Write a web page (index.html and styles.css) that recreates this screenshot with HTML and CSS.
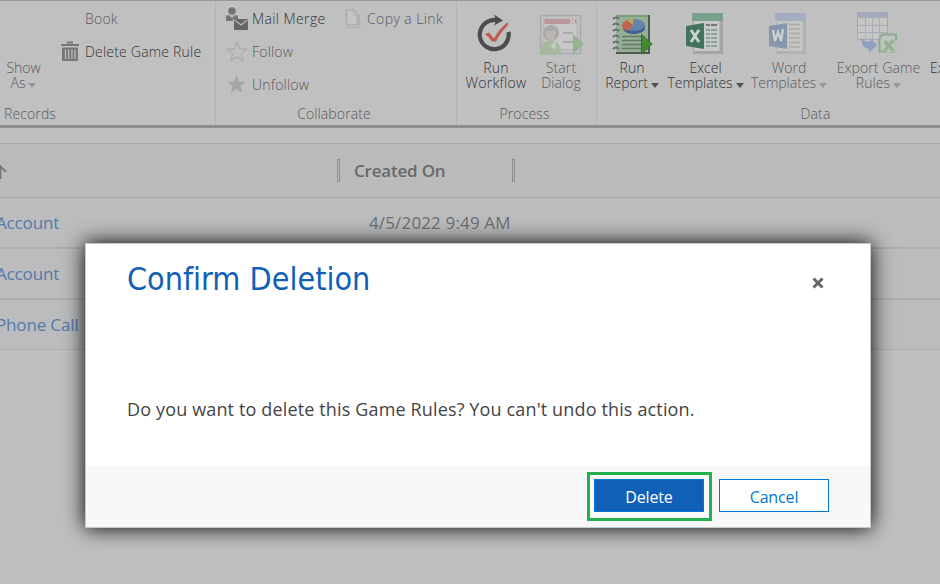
FILE: index.html
```html
<!DOCTYPE html>
<html lang="en">
<head>
<meta charset="utf-8">
<title>Confirm Deletion</title>
<link rel="stylesheet" href="styles.css">
</head>
<body>
<header class="ribbon">
  <section class="group records">
    <div class="group-body">
      <div class="big-button disabled show-as"><span>Show</span><span>As<i class="caret"></i></span></div>
      <div class="stack">
        <div class="command disabled"><span class="icon-slot"></span><span>Book</span></div>
        <div class="command"><span class="icon-slot"><svg width="20" height="22" viewBox="0 0 20 22"><path d="M6 1.500h6M0 4h18" stroke="#777" stroke-width="2"/><path d="M1 6.500h16v12.500q0 1-1 1h-14q-1 0-1-1z" fill="#777"/><path d="M4.500 8.500v9.500M7.700 8.500v9.500M10.900 8.500v9.500M14 8.500v9.500" stroke="#bbb" stroke-width="1.300"/></svg></span><span>Delete Game Rule</span></div>
      </div>
    </div>
    <div class="group-label">Records</div>
  </section>
  <section class="group collaborate">
    <div class="group-body">
      <div class="stack">
        <div class="command mail"><span class="icon-slot"><svg width="23" height="23" viewBox="0 0 23 23"><circle cx="7" cy="4" r="3.800" fill="#747474"/><path d="M1 14V10q0-2 3-2l3 3 3-3q3 0 3 2v2H8v2z" fill="#747474"/><path d="M9 12h14v11H9z" fill="#666"/><path d="M9.500 13l6.500 5 6.500-5" fill="none" stroke="#b5b5b5" stroke-width="1.200"/></svg></span><span>Mail Merge</span></div>
        <div class="command disabled"><span class="icon-slot"><svg width="23" height="23" viewBox="0 0 23 23"><path d="M11 2.500l2.600 6.300 6.700.5-5 4.500 1.600 6.700-5.900-3.700-5.900 3.700 1.600-6.700L1.700 9.300l6.700-.5z" fill="none" stroke="#adadad" stroke-width="1.500"/></svg></span><span>Follow</span></div>
        <div class="command disabled"><span class="icon-slot"><svg width="23" height="23" viewBox="0 0 23 23"><path d="M10.500 2l2.400 6.600 6.800.2-5.300 4.300 1.900 6.700-5.800-3.900-5.800 3.900 1.900-6.700-5.300-4.300 6.800-.2z" fill="#a5a5a5"/></svg></span><span>Unfollow</span></div>
      </div>
      <div class="stack copy">
        <div class="command disabled"><span class="icon-slot"><svg width="18" height="22" viewBox="0 0 18 22"><path d="M1.500 2h7l4 4v11h-11z" fill="#c4c4c4" stroke="#adadad" stroke-width="1.700"/><path d="M8.500 2v5h4" fill="none" stroke="#adadad"/><path d="M2.500 19.500h12V6" fill="none" stroke="#adadad" stroke-width="1.200"/></svg></span><span>Copy a Link</span></div>
      </div>
    </div>
    <div class="group-label">Collaborate</div>
  </section>
  <section class="group process">
    <div class="group-body">
      <div class="big-button run-workflow">
        <svg width="44" height="44" viewBox="0 0 44 44"><path d="M18 8.500A14.500 14.500 0 1 0 35.500 20" fill="none" stroke="#4c4c4e" stroke-width="4.200"/><path d="M17 8.800q4-1.500 8-.8" fill="none" stroke="#4c4c4e" stroke-width="4.200"/><path d="M21 2.500l9 6-9 5 2-5z" fill="#4c4c4e"/><path d="M12 22l4-1.500 5 6Q26 16.500 35 10l-.5 4q-7 6-11.500 15.500h-4q-3-4-7-7.500z" fill="#c35a50"/></svg>
        <span>Run</span><span>Workflow</span></div>
      <div class="big-button disabled start-dialog">
        <svg width="48" height="44" viewBox="0 0 48 44"><path d="M3.500 3.500h40v38h-40z" fill="#c0c0c0" stroke="#a8aaaf" stroke-width="1.500"/><path d="M7 7.500h33v30H7z" fill="#c8c8c8" stroke="#b4b4b4"/><path d="M7.500 7h32v5h-32z" fill="#bc969d"/><path d="M33 7l5 5m0-5l-5 5" stroke="#ccc" stroke-width="1.500"/><path d="M26 21h10M26 30h10" stroke="#aaa" stroke-width="2"/><path d="M3 42q0-11 7-13h7q7 3 7 11l-5 3H5z" fill="#a5b89e"/><path d="M9 29l5 4 5-4-1 9z" fill="#c6cbc5"/><ellipse cx="14" cy="21" rx="8" ry="8" fill="#aaa9a8"/><path d="M8 19q7 1 11-2 0 11-5 12-6-2-6-10z" fill="#bab6b2"/><path d="M36 22l11 10-11 10z" fill="#92b58d"/></svg>
        <span>Start</span><span>Dialog</span></div>
    </div>
    <div class="group-label">Process</div>
  </section>
  <section class="group data">
    <div class="group-body">
      <div class="big-button run-report">
        <svg width="44" height="44" viewBox="0 0 44 44"><path d="M5 3h34v39H5z" fill="#4c5b4e"/><path d="M5 4h32v36H5z" fill="#96ad96"/><path d="M5 4h32" stroke="#76a174" stroke-width="2"/><path d="M12 14v3a11 5.500 0 0 0 22-1v-3z" fill="#41628a"/><ellipse cx="23" cy="13" rx="11" ry="6" fill="#6384ab"/><path d="M22 13l-6-5q-7 3-4 9l5 1.500z" fill="#c1644d"/><path d="M22 13l-6-5 6-1.500z" fill="#bfa859"/><path d="M11 24.500h19M11 28.500h19M11 32.500h20M11 36.500h21" stroke="#647965" stroke-width="1.400"/><path d="M2 7q3-3 6 0M2 13q3-3 6 0M2 19q3-3 6 0M2 25q3-3 6 0M2 31q3-3 6 0M2 37q3-3 6 0" fill="none" stroke="#686b6d" stroke-width="1.900"/><path d="M30.500 22.500L41 32 30.500 42z" fill="#448a32" stroke="#326e25"/></svg>
        <span>Run</span><span>Report<i class="caret"></i></span></div>
      <div class="big-button excel">
        <svg width="40" height="44" viewBox="0 0 40 44"><path d="M9 3h30v39H9z" fill="#a5a5a5"/><path d="M9.500 1.500h26.500v38H9.500z" fill="#c8c8c8" stroke="#a2a5a3"/><path d="M8 1h31v8H8z" fill="#7aa18e"/><g fill="#86a696"><path d="M22 17h4v2h-4zM27 17h6v2h-6zM22 21h4v2h-4zM27 21h6v2h-6zM22 25h4v2h-4zM27 25h6v2h-6zM22 29h4v2h-4zM27 29h6v2h-6zM22 33h4v2h-4zM27 33h6v2h-6z"/></g><path d="M22 12h4v2h-4zM27 12h6v2h-6z" fill="#777"/><path d="M2 14l18-3v26L2 34z" fill="#427560"/><path d="M7 18l8 12M15 18L7 30" stroke="#d0d4d2" stroke-width="2.800"/></svg>
        <span>Excel</span><span>Templates<i class="caret"></i></span></div>
      <div class="big-button disabled word">
        <svg width="40" height="44" viewBox="0 0 40 44"><path d="M9 3h30v39H9z" fill="#b2b2b2"/><path d="M9.500 1.500h26.500v38H9.500z" fill="#c5c5c5" stroke="#b1b3b8"/><path d="M8 1h31v8H8z" fill="#a5aec0"/><path d="M22 12.500h11M22 17h11M22 21.500h11M22 26h11M22 30.500h11M22 35h11" stroke="#aaa" stroke-width="1.500"/><path d="M2 14l18-3v26L2 34z" fill="#8796ad"/><path d="M6 18l2 11 3-9 3 9 2-12" fill="none" stroke="#d0d0d0" stroke-width="2.200"/></svg>
        <span>Word</span><span>Templates<i class="caret"></i></span></div>
      <div class="big-button disabled export">
        <svg width="44" height="44" viewBox="0 0 44 44"><path d="M2.500.5h30v27h-30z" fill="#c6c6c6" stroke="#a2a8b5"/><path d="M3 1h29v5H3z" fill="#a3aaba"/><path d="M2 13.500h30M2 20.500h30M10.500 1v27M17.500 1v27M24.500 1v27" stroke="#a8adb8"/><path d="M27 22.500h14v17H24.500v-13z" fill="#c1c5c1" stroke="#8caa8e" stroke-width="2"/><path d="M29 28h13v12H29z" fill="#b5c2b5"/><path d="M29.500 29l9 10M38.500 28l-9 11" stroke="#94b092" stroke-width="2.800"/><path d="M6 25q3 6 10 4l-1-3 7 7-8 8v-4Q6 36 6 25z" fill="#8f9fc0"/></svg>
        <span>Export Game</span><span>Rules<i class="caret"></i></span></div>
      <div class="big-button export-excel"><div class="icon-gap"></div><span>Export to</span></div>
    </div>
    <div class="group-label">Data</div>
  </section>
</header>
<main class="grid">
  <div class="grid-header">
    <svg class="sort" width="7" height="16" viewBox="0 0 7 16"><path d="M.5 1v14M.5 2.500l5.500 5.500" fill="none" stroke="#777" stroke-width="1.800"/></svg>
    <i class="resizer"></i><span class="created-on">Created On</span><i class="resizer"></i>
  </div>
  <div class="row"><span class="name">Account</span><span class="date">4/5/2022 9:49 AM</span></div>
  <div class="row"><span class="name">Account</span></div>
  <div class="row"><span class="name">Phone Call</span></div>
</main>
<div class="dialog" role="dialog">
  <div class="dialog-header">
    <h1>Confirm Deletion</h1>
    <svg class="close" width="12" height="12" viewBox="0 0 12 12"><path d="M1.500 1.500l9 9m0-9l-9 9" stroke="#66676a" stroke-width="3"/></svg>
  </div>
  <p>Do you want to delete this Game Rules? You can't undo this action.</p>
  <footer>
    <span class="highlight"><button class="primary">Delete</button></span>
    <button class="secondary">Cancel</button>
  </footer>
</div>
</body>
</html>
```
FILE: styles.css
```css
* { box-sizing: border-box; }
body { margin: 0; width: 940px; height: 584px; overflow: hidden; background: #bfbfbf; font: 14px/15px "Open Sans", "Noto Sans", sans-serif; color: #303134; }
svg { display: block; flex: none; }
span { white-space: nowrap; }
.ribbon { display: flex; height: 128px; overflow: hidden; background: #c0c0c0; border-top: 1px solid #98989c; border-bottom: 3px solid #8d8d8d; font-weight: 300; }
.group { flex: none; height: 123px; margin-top: 1px; }
.group + .group { border-left: 1px solid #b3b3b3; }
.group-body { display: flex; height: 99px; }
.group-label { height: 26px; line-height: 26px; text-align: center; color: #58595c; letter-spacing: .12px; }
.records { width: 215px; }
.records .group-label { text-align: left; padding-left: 4px; }
.collaborate { width: 241px; }
.collaborate .group-label, .process .group-label { padding-right: 4px; }
.process { width: 140px; }
.data { width: 438px; }
.command { display: flex; align-items: center; height: 33px; letter-spacing: .2px; }
.disabled { color: #58595d; }
.records .icon-slot { width: 24px; }
.records .stack { padding-left: 14px; }
.collaborate .icon-slot { width: 26px; }
.collaborate .stack { width: 111px; padding-left: 10px; }
.mail { letter-spacing: .4px; }
.mail svg { margin-left: -1px; }
.collaborate .copy { width: 125px; padding-left: 18px; }
.copy .command { letter-spacing: .4px; }
.copy .icon-slot { width: 22px; }
.big-button { display: flex; flex: none; flex-direction: column; align-items: center; padding-top: 10px; }
.big-button svg, .icon-gap { height: 44px; margin-bottom: 4px; }
.show-as { width: 47px; padding-top: 58px; }
.caret { display: inline-block; margin-left: 3px; border: 4px solid transparent; border-top: 5px solid #505154; border-bottom: 0; }
.disabled .caret { border-top-color: #969696; }
.run-workflow { width: 78px; letter-spacing: .3px; }
.run-workflow svg { margin-right: 2px; }
.start-dialog { width: 52px; letter-spacing: .1px; }
.run-report { width: 70px; }
.run-report svg { margin-left: 1px; }
.excel { width: 77px; }
.word { width: 90px; }
.excel svg, .word svg, .export svg { margin-right: 4px; }
.export { width: 89px; letter-spacing: .1px; }
.export-excel { width: 69px; padding-left: 3px; }
.grid { margin-top: 15px; }
.grid-header { display: flex; align-items: center; height: 55px; background: #bbb; border-top: 1px solid #a9a9a9; border-bottom: 1px solid #a9a9a9; }
.sort { margin: 2px 330px 0 0; }
.resizer { width: 3px; height: 23px; border: 1px solid #8e8e8e; }
.created-on { width: 172px; padding-left: 14px; font-size: 17px; font-weight: 600; letter-spacing: -.2px; color: #68696b; }
.row { display: flex; align-items: center; height: 51px; background: #bbbcbe; border-bottom: 2px solid #adaeb0; color: #6d6e70; font-size: 17px; }
.row:last-child { height: 50px; border-bottom-width: 1px; padding-bottom: 1px; }
.name { width: 373px; margin-left: -4px; letter-spacing: -.15px; color: #5579a8; }
.date { letter-spacing: .15px; }
.dialog { position: absolute; left: 85px; top: 243px; width: 786px; height: 285px; display: flex; flex-direction: column; background: #fff; border: 1px solid #c8c8c8; box-shadow: 0 0 20px #000; }
.dialog-header { display: flex; justify-content: space-between; height: 150px; padding: 14px 46px 0 41px; }
h1 { margin: 0; font: 32px/42px "DejaVu Sans Condensed", "Open Sans", sans-serif; font-variant-ligatures: none; color: #1160b7; }
.close { margin-top: 19px; }
p { margin: 0 0 0 41px; font-size: 18px; line-height: 30px; letter-spacing: .145px; color: #444; }
footer { display: flex; align-items: flex-start; justify-content: flex-end; gap: 7px; margin-top: auto; height: 61px; padding: 6px 41px 0 0; background: #f8f8f8; }
button { width: 110px; height: 33px; padding: 2px 0 0; background: #fff; border: 1px solid #0078d7; color: #0078d7; font: 16px/20px "Open Sans", sans-serif; letter-spacing: -.15px; }
.highlight { padding: 4px 5px 6px 4px; border: 3px solid #22b14c; }
.primary { display: block; background: #1160b7; color: #fff; }
.secondary { margin-top: 7px; }
```
